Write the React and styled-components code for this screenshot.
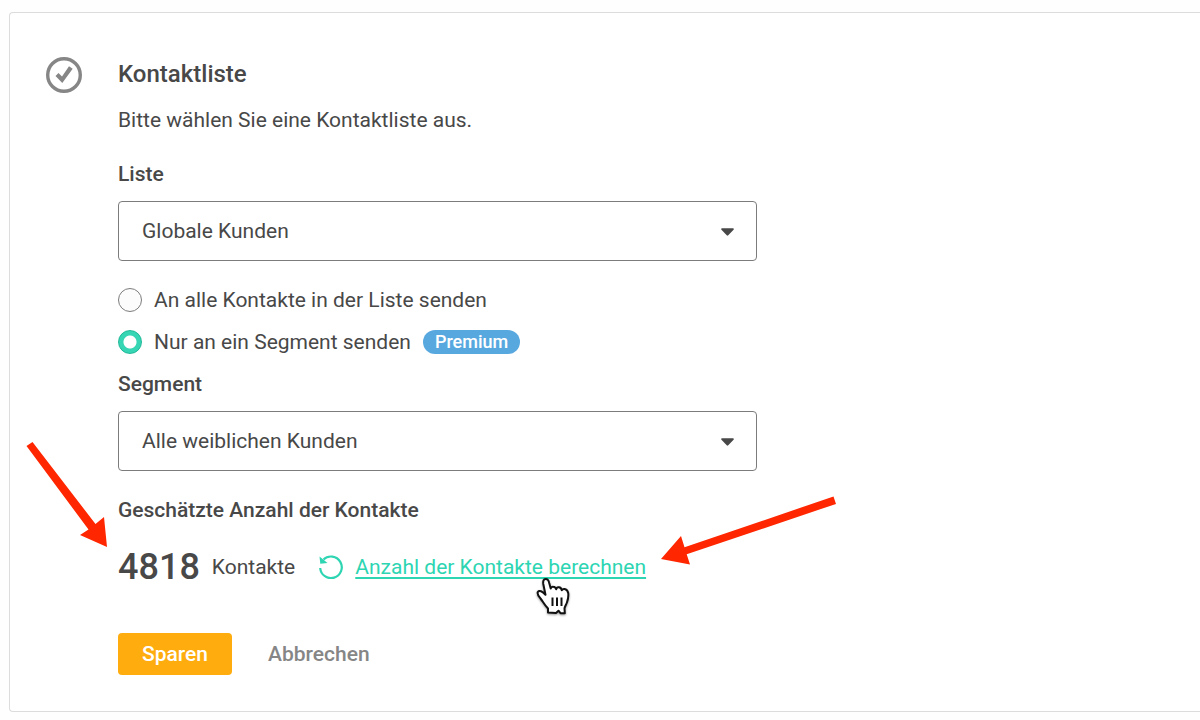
import { useState } from "react";
import styled, { createGlobalStyle } from "styled-components";

const lists = ["Globale Kunden"];
const segments = ["Alle weiblichen Kunden"];

const SelectField = ({ id, label, options }) => (
  <Field>
    <Label htmlFor={id}>{label}</Label>
    <SelectBox>
      <Select id={id}>
        {options.map((item) => (
          <option key={item}>{item}</option>
        ))}
      </Select>
      <Caret viewBox="0 0 12 7" aria-hidden="true">
        <path d="M1 0h10c.8 0 1.2.8.6 1.400L6.700 6.600a1 1 0 0 1-1.400 0L.4 1.400C-.2.8.2 0 1 0z" />
      </Caret>
    </SelectBox>
  </Field>
);

const App = () => {
  const [target, setTarget] = useState("segment");

  return (
    <>
      <GlobalStyle />
      <Card>
        <StepIcon viewBox="0 0 36 36" aria-hidden="true">
          <circle cx="18" cy="18" r="16.3" />
          <path d="M9.500 19l3-3 3.500 3.400 7-10.200 3.700 2.500L16.300 26z" />
        </StepIcon>
        <Content>
          <Title>Kontaktliste</Title>
          <Description>Bitte wählen Sie eine Kontaktliste aus.</Description>
          <SelectField id="list" label="Liste" options={lists} />
          <RadioGroup>
            <RadioLabel>
              <Radio
                name="target"
                checked={target === "all"}
                onChange={() => setTarget("all")}
              />
              An alle Kontakte in der Liste senden
            </RadioLabel>
            <RadioLabel>
              <Radio
                name="target"
                checked={target === "segment"}
                onChange={() => setTarget("segment")}
              />
              Nur an ein Segment senden
              <Badge>Premium</Badge>
            </RadioLabel>
          </RadioGroup>
          <SelectField id="segment" label="Segment" options={segments} />
          <Subtitle>Geschätzte Anzahl der Kontakte</Subtitle>
          <Estimate>
            <Count>4818</Count>
            <span>Kontakte</span>
            <RefreshIcon viewBox="0 0 24 24" aria-hidden="true">
              <path d="M1.200 13A10.800 10.800 0 1 0 4.500 4.500" />
              <polygon points="0.500,1.500 1.300,8.800 8.500,8" />
            </RefreshIcon>
            <CalcLink href="#">Anzahl der Kontakte berechnen</CalcLink>
            <LeftArrow viewBox="0 0 82 106" aria-hidden="true">
              <polygon points="0.500,4 6.500,0 69.500,82 78,75 81,105 54,93 62.500,87.500" />
            </LeftArrow>
            <RightArrow viewBox="0 0 176 70" aria-hidden="true">
              <polygon points="0,63 20,40 23.500,51.300 172.500,0.500 175,7.900 25.700,58.300 29,68.500" />
            </RightArrow>
            <Cursor viewBox="0 0 36 42" aria-hidden="true">
              <path d="M12 35.500v-4C8 27.500 7 24.500 4.500 21.500 2.500 19 .8 17 1.800 15c1.300-2 4.700-.8 7.700 2.800L7.300 7C6.800 3.800 7.800 2 9.700 2s3 1.500 3.500 4l1.500 5.500c.3-1.500 1.300-2 2.600-1.800 1.500.1 2.500 1.100 2.900 2.600.3-1.500 1.300-2.200 2.700-2 1.600.2 2.500 1.200 2.900 2.900.6-1 1.400-1.400 2.700-1.200 1.900.300 3.200 1.500 3.700 4 .6 4-.2 6.300-1.200 9.300-.8 2.500-2 3.700-2.500 6.200l.3 4.700h-4.300l-2-2.500-2.500 2.300z" />
              <path d="M16.500 20.500v8.500M21 20.500v8.500M25.500 20.500v8.500" />
            </Cursor>
          </Estimate>
          <Actions>
            <SaveButton>Sparen</SaveButton>
            <CancelButton>Abbrechen</CancelButton>
          </Actions>
        </Content>
      </Card>
    </>
  );
};

const GlobalStyle = createGlobalStyle`
  * {
    box-sizing: border-box;
  }
  body {
    margin: 0;
    background: #fefefe;
    color: #484848;
    font-family: Roboto, "Liberation Sans", sans-serif;
    font-size: 21px;
    line-height: 30px;
  }
`;

const Card = styled.main`
  display: flex;
  align-items: flex-start;
  gap: 36px;
  margin: 12px 0 8px 9px;
  padding: 44px 36px 36px;
  background: #fff;
  border: 1px solid #dcdcdc;
  border-right: none;
  border-radius: 4px 0 0 4px;
`;

const StepIcon = styled.svg`
  flex: none;
  width: 36px;
  height: 36px;
  fill: #868686;
  circle {
    fill: none;
    stroke: #868686;
    stroke-width: 3.4;
  }
`;

const Content = styled.div`
  flex: 1;
  max-width: 639px;
  padding-top: 2px;
`;

const Title = styled.h1`
  margin: 0 0 16px;
  font-size: 24px;
  font-weight: 500;
`;

const Description = styled.p`
  margin: 0 0 24px;
`;

const Field = styled.div`
  display: flex;
  flex-direction: column;
  gap: 12px;
`;

const Label = styled.label`
  font-weight: 500;
`;

const SelectBox = styled.div`
  display: grid;
  align-items: center;
  > * {
    grid-area: 1 / 1;
  }
`;

const Select = styled.select`
  width: 100%;
  height: 60px;
  padding: 0 60px 0 23px;
  appearance: none;
  background: #fff;
  border: 1px solid #7c7c7c;
  border-radius: 4px;
  color: inherit;
  font: inherit;
`;

const Caret = styled.svg`
  width: 13px;
  height: 8px;
  margin: 2px 23px 0 0;
  justify-self: end;
  fill: #484848;
  pointer-events: none;
`;

const RadioGroup = styled.div`
  display: flex;
  flex-direction: column;
  gap: 12px;
  margin: 24px 0 12px;
`;

const RadioLabel = styled.label`
  display: flex;
  align-items: center;
  gap: 12px;
`;

const Radio = styled.input.attrs({ type: "radio" })`
  flex: none;
  width: 24px;
  height: 24px;
  margin: 0;
  appearance: none;
  background: #fcfcfc;
  border: 1px solid #7c7c7c;
  border-radius: 50%;
  &:checked {
    background: radial-gradient(circle, #fff 6px, #36d6b5 7px);
    border-color: #1fb898;
  }
`;

const Badge = styled.span`
  padding: 0 12px;
  border-radius: 12px;
  background: #58a8e0;
  color: #fff;
  font-size: 18px;
  font-weight: 500;
  line-height: 24px;
`;

const Subtitle = styled.h2`
  margin: 24px 0 21px;
  font-size: 21px;
  font-weight: 500;
  line-height: 30px;
`;

const Estimate = styled.div`
  position: relative;
  display: flex;
  align-items: center;
  gap: 12px;
  height: 42px;
`;

const Count = styled.strong`
  font-size: 36px;
  font-weight: 500;
`;

const RefreshIcon = styled.svg`
  width: 24px;
  height: 24px;
  margin-left: 12px;
  fill: #2dd5b2;
  path {
    fill: none;
    stroke: #2dd5b2;
    stroke-width: 2.2;
  }
`;

const CalcLink = styled.a`
  color: #2dd5b2;
  text-underline-offset: 3px;
`;

const Arrow = styled.svg`
  position: absolute;
  fill: #ff2600;
  pointer-events: none;
`;

const LeftArrow = styled(Arrow)`
  top: -104px;
  left: -92px;
  width: 82px;
  height: 106px;
`;

const RightArrow = styled(Arrow)`
  top: -50px;
  left: 543px;
  width: 176px;
  height: 70px;
`;

const Cursor = styled.svg`
  position: absolute;
  top: 31px;
  left: 418px;
  width: 36px;
  height: 42px;
  fill: #fff;
  stroke: #111;
  stroke-width: 2;
  stroke-linejoin: round;
  filter: drop-shadow(0 1px 1px rgba(0, 0, 0, 0.4));
  pointer-events: none;
`;

const Actions = styled.div`
  display: flex;
  gap: 12px;
  margin-top: 45px;
`;

const Button = styled.button`
  height: 42px;
  padding: 0 24px;
  border: none;
  border-radius: 4px;
  font: inherit;
  font-weight: 500;
`;

const SaveButton = styled(Button)`
  background: #ffac0e;
  color: #fff;
`;

const CancelButton = styled(Button)`
  background: none;
  color: #868686;
`;

export default App;
